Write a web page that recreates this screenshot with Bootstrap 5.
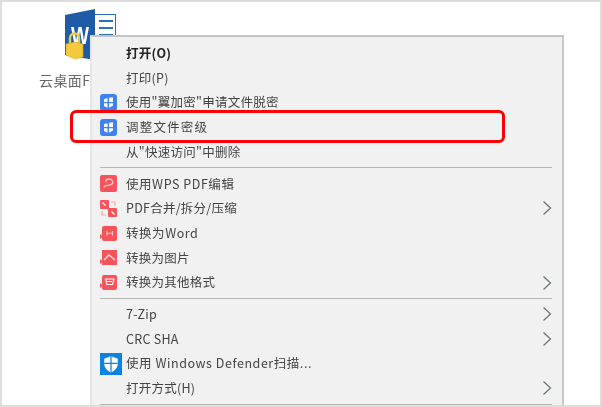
<!DOCTYPE html>
<html lang="zh-CN">
<head>
  <meta charset="UTF-8">
  <title>右键菜单</title>
  <meta name="viewport" content="width=device-width, initial-scale=1" />
  <link rel="stylesheet" href="https://cdn.jsdelivr.net/npm/bootstrap@5.3.0/dist/css/bootstrap.min.css">
  <script src="https://cdn.jsdelivr.net/npm/bootstrap@5.3.0/dist/js/bootstrap.bundle.min.js"></script>
  <style>
    html, body { height: 407px; overflow: hidden; background: #fff; }
    .shot-frame {
      position: relative; width: 602px; height: 407px; overflow: hidden;
      border: 2px solid #ddd; background: #fff;
      font-family: "Noto Sans CJK SC", "Noto Sans", sans-serif;
      filter: blur(.35px);
    }
    .desk-file { width: 90px; padding-top: 7px; padding-left: 37px; }
    .desk-file svg { display: block; margin-left: 26px; }
    .desk-name { font-size: 14px; color: #666; white-space: nowrap; margin-top: 9px; letter-spacing: .4px; }
    .ctx-menu {
      position: absolute; left: 88px; top: 33px; width: 474px; height: 380px;
      background: #f1f1f1; border: 0; border-top: 2px solid #c4c4c4; border-left: 2px solid #e6e6e6;
      border-right: 2px solid #c8c8c8; border-radius: 0; padding: 0; margin: 0;
    }
    .ctx-row {
      height: 24.7px; padding: 0 0 0 8px; color: #444; font-size: 12.5px; letter-spacing: .25px;
      line-height: 1; white-space: nowrap;
    }
    .ctx-row:first-child { margin-top: 4px; }
    .ctx-row:hover { background: #e4e4e4; color: #444; }
    .ctx-ico { width: 17px; height: 17px; margin-right: 9px; flex: none; }
    .ctx-ico-big { width: 22px; height: 22px; margin-right: 4px; }
    .ctx-gap { width: 17px; margin-right: 9px; flex: none; }
    .ctx-arrow { margin-left: auto; margin-right: 10px; flex: none; }
    .ctx-sep { height: 1px; background: #b5b5b5; margin: 3px 10px 3px 8px; opacity: 1; border: 0; }
    .txt-wide { letter-spacing: 1.2px; }
    .txt-latin { letter-spacing: .55px; }
    .mark-box {
      position: absolute; left: 68px; top: 108px; width: 435px; height: 33px; z-index: 1001;
      border: 3px solid #f00; border-radius: 6px; pointer-events: none;
    }
    .txt-strong { font-weight: 700; color: #222; }
  </style>
</head>
<body class="m-0">
  <svg width="0" height="0" class="position-absolute">
    <defs>
      <symbol id="ic-sec" viewBox="0 0 17 17">
        <rect width="17" height="17" rx="3" fill="#3d82f0"/>
        <path d="M4 5 7.500 4.200V8H4ZM9 3.700 13 3.200V8H9ZM4 9.200H7.500V13.800L4 12ZM9 9.200H13V11.500L9 13.800Z" fill="#fff"/>
      </symbol>
      <symbol id="ic-chev" viewBox="0 0 10 16">
        <path d="M1.500 1.500 8.500 8 1.500 14.500" fill="none" stroke="#6f7680" stroke-width="1.300"/>
      </symbol>
    </defs>
  </svg>

  <div class="shot-frame">
    <!-- 桌面文件 -->
    <div class="desk-file">
      <svg width="52" height="52" viewBox="0 0 52 52">
        <rect x="29" y="5.500" width="21.500" height="32" fill="#fff" stroke="#2f6fb5"/>
        <path d="M34 12H48M34 19H48M34 26H48" stroke="#2f6fb5" stroke-width="1.800"/>
        <path d="M0 6 30 0V51L0 46Z" fill="#1e5ca8"/>
        <text x="6" y="35" font-size="24" font-weight="700" fill="#fff" font-family="Liberation Sans, sans-serif" textLength="18" lengthAdjust="spacingAndGlyphs">W</text>
        <path d="M5 34V29a4.500 4.500 0 0 1 9 0v5" fill="none" stroke="#ecc94a" stroke-width="2.500"/>
        <path d="M1 35 10 33 18 35V48L10 50 1 46Z" fill="#f3c93e" stroke="#d9a520" stroke-width=".6"/>
      </svg>
      <div class="desk-name">云桌面FA文件</div>
    </div>

    <!-- 菜单 -->
    <div class="dropdown-menu show ctx-menu">
      <a class="dropdown-item ctx-row d-flex align-items-center" href="#"><span class="ctx-gap"></span><span class="txt-strong">打开(O)</span></a>
      <a class="dropdown-item ctx-row d-flex align-items-center" href="#"><span class="ctx-gap"></span>打印(P)</a>
      <a class="dropdown-item ctx-row d-flex align-items-center" href="#"><svg class="ctx-ico"><use href="#ic-sec"/></svg>使用"翼加密"申请文件脱密</a>
      <a class="dropdown-item ctx-row d-flex align-items-center" href="#"><svg class="ctx-ico"><use href="#ic-sec"/></svg><span class="txt-wide">调整文件密级</span></a>
      <a class="dropdown-item ctx-row d-flex align-items-center" href="#"><span class="ctx-gap"></span>从"快速访问"中删除</a>
      <div class="ctx-sep"></div>
      <a class="dropdown-item ctx-row d-flex align-items-center" href="#">
        <svg class="ctx-ico" viewBox="0 0 17 17"><rect width="17" height="17" rx="2" fill="#f4555a"/><path d="M4 12.500c0-3 6-1.500 8-3.500s0-5-3-5-3.500 2-3 3.500" fill="none" stroke="#fbc9c9" stroke-width="1.300"/></svg><span class="txt-latin">使用WPS PDF编辑</span></a>
      <a class="dropdown-item ctx-row d-flex align-items-center" href="#">
        <svg class="ctx-ico" viewBox="0 0 17 17"><rect width="9" height="9" rx="1" fill="#f4555a"/><rect x="8" y="8" width="9" height="9" rx="1" fill="#f4555a"/><path d="M2.500 2.500 5.500 5.500M11.500 11.500 14.500 14.500" fill="none" stroke="#fff" stroke-width="1.400"/><path d="M11 2h4v4M2 11v4h4" fill="none" stroke="#f9a9a9" stroke-width="1.200"/></svg>PDF合并/拆分/压缩<svg class="ctx-arrow" width="10" height="16"><use href="#ic-chev"/></svg></a>
      <a class="dropdown-item ctx-row d-flex align-items-center" href="#">
        <svg class="ctx-ico" viewBox="0 0 17 17"><rect x="2" y="1" width="15" height="15" rx="2" fill="#f4555a"/><path d="M0 9 3 11.500 0 14Z" fill="#f4555a"/><path d="M7 6V10.500M12.500 6V10.500M7 8.200H12.500" stroke="#fbc9c9" stroke-width="1.100"/></svg><span class="txt-latin">转换为Word</span></a>
      <a class="dropdown-item ctx-row d-flex align-items-center" href="#">
        <svg class="ctx-ico" viewBox="0 0 17 17"><path d="M2 1H17V16H2Z" fill="#f4555a"/><path d="M0 10 3 12.500 0 15Z" fill="#f4555a"/><path d="M4 11 9 6 15 11" fill="none" stroke="#fbd9d9" stroke-width="1.300"/></svg>转换为图片</a>
      <a class="dropdown-item ctx-row d-flex align-items-center" href="#">
        <svg class="ctx-ico" viewBox="0 0 17 17"><rect x="2" y="1" width="15" height="15" rx="2" fill="#f4555a"/><path d="M0 9 3 11.500 0 14Z" fill="#f4555a"/><path d="M5.500 5H14L12.500 10.500H7ZM7.500 7.500H12" fill="none" stroke="#fff" stroke-width="1.100"/></svg>转换为其他格式<svg class="ctx-arrow" width="10" height="16"><use href="#ic-chev"/></svg></a>
      <div class="ctx-sep"></div>
      <a class="dropdown-item ctx-row d-flex align-items-center" href="#"><span class="ctx-gap"></span>7-Zip<svg class="ctx-arrow" width="10" height="16"><use href="#ic-chev"/></svg></a>
      <a class="dropdown-item ctx-row d-flex align-items-center" href="#"><span class="ctx-gap"></span>CRC SHA<svg class="ctx-arrow" width="10" height="16"><use href="#ic-chev"/></svg></a>
      <a class="dropdown-item ctx-row d-flex align-items-center" href="#">
        <svg class="ctx-ico ctx-ico-big" viewBox="0 0 21 21"><rect width="21" height="21" fill="#0a84e0"/><path d="M10.500 3 17 5.500V10C17 14 14 17 10.500 18.500 7 17 4 14 4 10V5.500Z" fill="#fff"/><path d="M10.500 3V18.500M4 10H17" stroke="#0a84e0" stroke-width="1.200"/></svg><span class="txt-latin">使用 Windows Defender扫描...</span></a>
      <a class="dropdown-item ctx-row d-flex align-items-center" href="#"><span class="ctx-gap"></span>打开方式(H)<svg class="ctx-arrow" width="10" height="16"><use href="#ic-chev"/></svg></a>
      <div class="ctx-sep"></div>
    </div>

    <div class="mark-box"></div>
  </div>
</body>
</html>
